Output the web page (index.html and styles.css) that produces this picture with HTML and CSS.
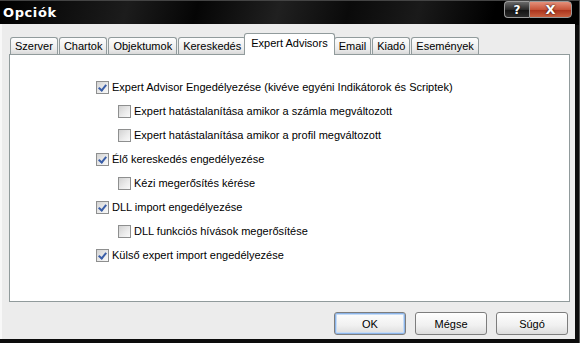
FILE: index.html
```html
<!DOCTYPE html>
<html lang="hu">
<head>
  <meta charset="UTF-8" />
  <title>Opciók</title>
  <link rel="stylesheet" href="styles.css">
</head>
<body>
  <div class="window">
    <div class="titlebar">
      <span class="title">Opciók</span>
      <div class="caption-btns">
        <span class="cap-btn help">?</span>
        <span class="cap-btn close">X</span>
      </div>
    </div>

    <div class="client">
      <div class="tabs">
        <span class="tab">Szerver</span>
        <span class="tab">Chartok</span>
        <span class="tab">Objektumok</span>
        <span class="tab">Kereskedés</span>
        <span class="tab active">Expert Advisors</span>
        <span class="tab">Email</span>
        <span class="tab">Kiadó</span>
        <span class="tab">Események</span>
      </div>

      <div class="panel">
        <label class="opt"><span class="box checked"></span>Expert Advisor Engedélyezése (kivéve egyéni Indikátorok és Scriptek)</label>
        <label class="opt sub"><span class="box"></span>Expert hatástalanítása amikor a számla megváltozott</label>
        <label class="opt sub"><span class="box"></span>Expert hatástalanítása amikor a profil megváltozott</label>
        <label class="opt"><span class="box checked"></span>Élő kereskedés engedélyezése</label>
        <label class="opt sub"><span class="box"></span>Kézi megerősítés kérése</label>
        <label class="opt"><span class="box checked"></span>DLL import engedélyezése</label>
        <label class="opt sub"><span class="box"></span>DLL funkciós hívások megerősítése</label>
        <label class="opt"><span class="box checked"></span>Külső expert import engedélyezése</label>
      </div>

      <div class="actions">
        <span class="btn default">OK</span>
        <span class="btn">Mégse</span>
        <span class="btn">Súgó</span>
      </div>
    </div>
  </div>
</body>
</html>
```

FILE: styles.css
```css
body {
  margin: 0;
  font-family: "Liberation Sans", Arial, sans-serif;
  font-size: 11px;
  color: #000;
  background: #000;
}

.window {
  width: 580px;
  height: 343px;
  display: flex;
  flex-direction: column;
  background: #0c0c0c;
  border-right: 1px solid #555;
  box-sizing: border-box;
}

/* Title bar */
.titlebar {
  height: 25px;
  flex: none;
  display: flex;
  justify-content: space-between;
  align-items: flex-start;
  background: linear-gradient(105deg, #000 0%, #1c1c1c 22%, #050505 34%, #202020 48%, #0a0a0a 60%, #1a1a1a 72%, #000 85%);
  border-top: 1px solid #444;
  box-sizing: border-box;
}

.title {
  color: #fff;
  font-family: "DejaVu Sans", sans-serif;
  font-weight: bold;
  font-size: 13px;
  letter-spacing: 0.6px;
  padding: 4px 0 0 3px;
}

.caption-btns {
  display: flex;
  margin-right: 7px;
}

.cap-btn {
  height: 17px;
  display: flex;
  align-items: center;
  justify-content: center;
  color: #fff;
  font-family: "DejaVu Sans", sans-serif;
  font-weight: bold;
  font-size: 12px;
  border: 1px solid #9a9a9a;
  box-sizing: border-box;
  text-shadow: 0 0 2px #000;
}

.help {
  width: 25px;
  border-radius: 4px 0 0 4px;
  border-right: none;
  background: linear-gradient(#6a6a6a, #2a2a2a 50%, #111 51%, #2b2b2b);
}

.close {
  width: 43px;
  border-radius: 0 4px 4px 0;
  background: linear-gradient(#e5907a, #c8553a 50%, #a8301a 51%, #c8603f);
  font-size: 13px;
}

/* Client area */
.client {
  flex: 1;
  display: flex;
  flex-direction: column;
  background: #ececec;
  margin: -1px 4px 4px 0;
  padding: 9px 5px 0 7px;
  border-left: 2px solid #f8f8f8;
}

.tabs {
  display: flex;
  align-items: flex-end;
  height: 21px;
  padding-left: 1px;
  position: relative;
  z-index: 1;
}

.tab {
  height: 17px;
  box-sizing: border-box;
  padding: 0 4px;
  margin-right: 1px;
  display: flex;
  align-items: center;
  font-size: 11px;
  border: 1px solid #919b9c;
  border-bottom: none;
  border-radius: 3px 3px 0 0;
  background: linear-gradient(#fdfdfd, #ececec 70%, #d9d9d9);
  color: #000;
}

.tab.active {
  height: 22px;
  margin: 0 -1px -1px -3px;
  padding: 0 6px 3px;
  background: #fff;
}

.panel {
  height: 248px;
  box-sizing: border-box;
  background: #fff;
  border: 1px solid #919b9c;
  padding-top: 20px;
  display: flex;
  flex-direction: column;
}

.opt {
  display: flex;
  align-items: center;
  gap: 3px;
  height: 24px;
  padding-left: 86px;
}

.opt.sub {
  padding-left: 108px;
}

.box {
  width: 13px;
  height: 13px;
  box-sizing: border-box;
  border: 1px solid #8e8f8f;
  background: linear-gradient(135deg, #d2d2d2, #ececec 60%, #fafafa);
  flex: none;
  position: relative;
}

.box.checked::after {
  content: "";
  position: absolute;
  left: 3px;
  top: 1px;
  width: 3px;
  height: 6px;
  border: solid #3a5ea8;
  border-width: 0 2px 2px 0;
  transform: rotate(40deg);
}

/* Buttons */
.actions {
  display: flex;
  justify-content: flex-end;
  gap: 9px;
  margin-top: 10px;
  padding-right: 2px;
}

.btn {
  width: 72px;
  height: 23px;
  box-sizing: border-box;
  display: flex;
  align-items: center;
  justify-content: center;
  font-size: 11px;
  border: 1px solid #7d7d7d;
  border-radius: 3px;
  background: linear-gradient(#fefefe, #f0f0f0 60%, #dcdcdc);
}

.btn.default {
  box-shadow: inset 0 0 0 1px #8cb4e8, inset 0 0 0 2px #c6dcf6;
}
```
